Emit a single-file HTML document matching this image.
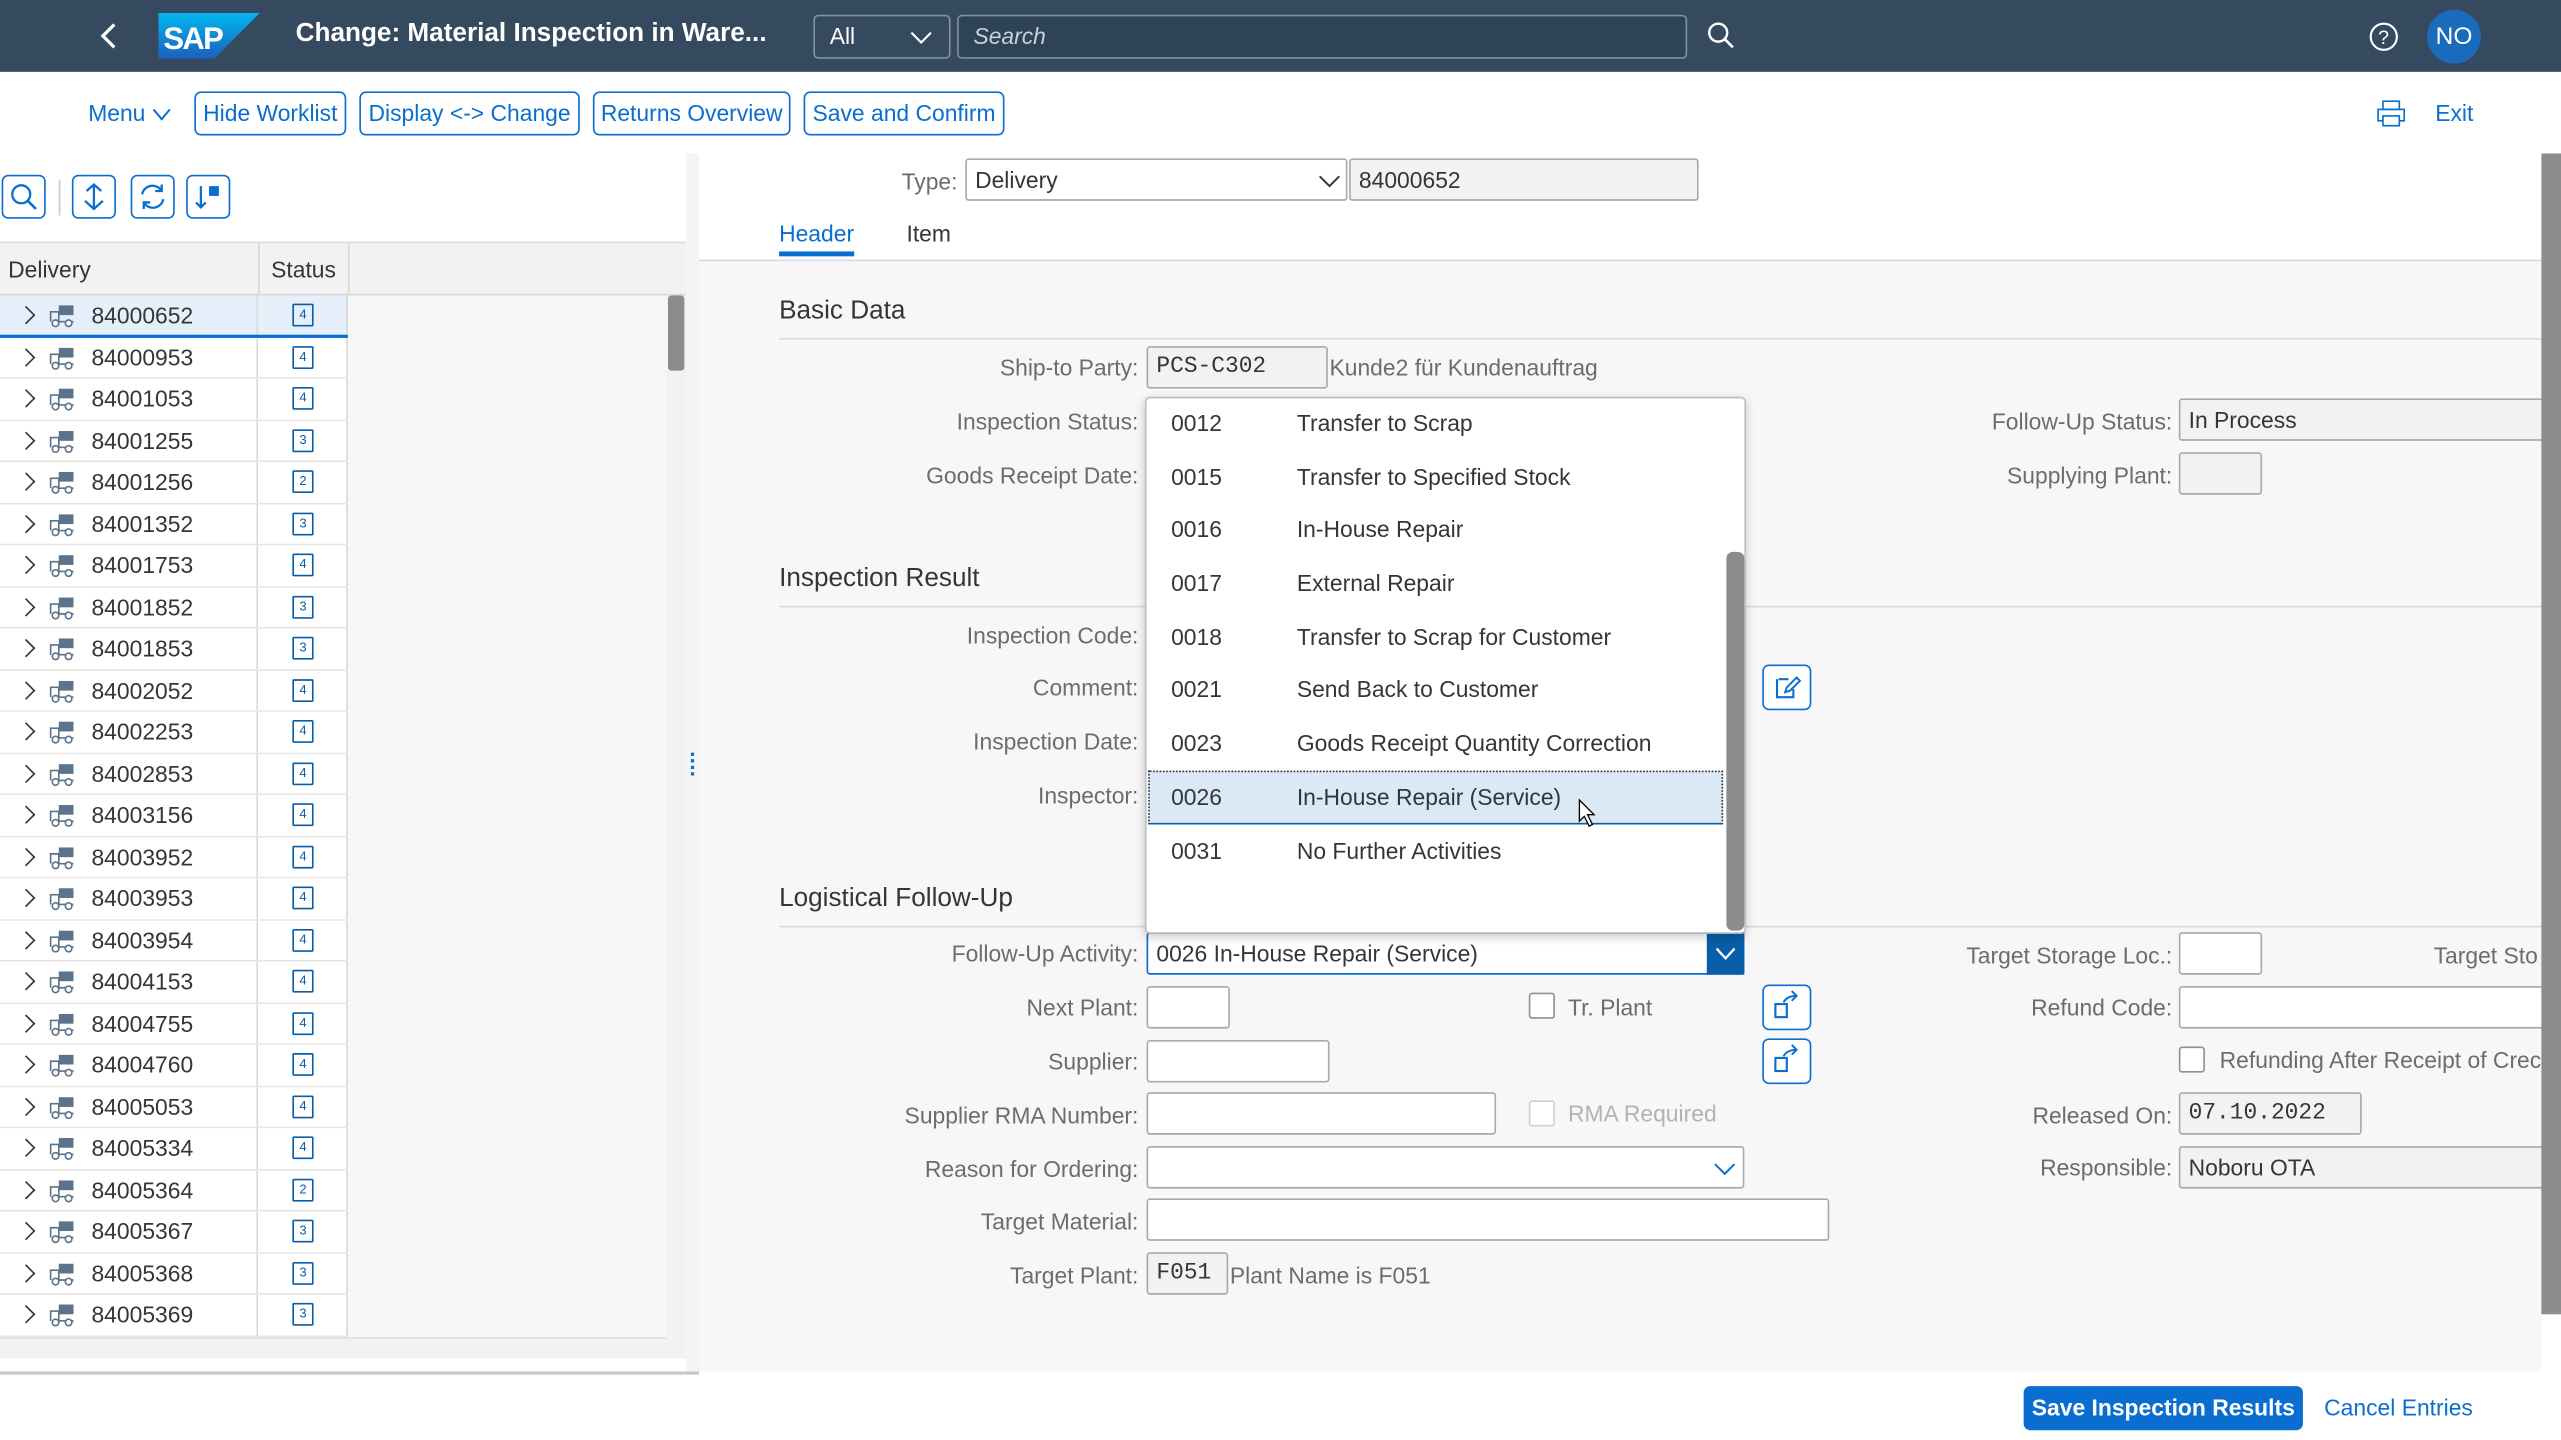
<!DOCTYPE html>
<html><head><meta charset="utf-8">
<style>
*{box-sizing:border-box;margin:0;padding:0}
html,body{width:2561px;height:1440px;overflow:hidden;background:#fff}
#w{position:absolute;left:0;top:0;width:1568px;height:882px;transform:scale(1.63329,1.63265);transform-origin:0 0;font-family:"Liberation Sans",sans-serif;font-size:14px;color:#32363a}
.a{position:absolute}
.hdr{left:0;top:0;width:1568px;height:44px;background:#354a5f}
.btn{position:absolute;top:56px;height:27px;border:1px solid #0a6ed1;border-radius:4px;color:#0a6ed1;font-size:14px;line-height:25px;text-align:center;background:#fff}
.ib{position:absolute;top:107px;width:27px;height:27px;border:1px solid #0a6ed1;border-radius:4px;background:#fff}
.row{position:absolute;left:0;width:213px;height:25.5px;border-bottom:1px solid #e5e5e5}
.row .c1{position:absolute;left:0;width:158px;height:100%;background:#fff;border-right:1px solid #d9d9d9}
.row .c2{position:absolute;left:158px;width:55px;height:100%;background:#fff;border-right:1px solid #d9d9d9}
.row .ch{position:absolute;left:12px;top:7px;width:8px;height:12px;background:none}
.row .ch::before{content:"";position:absolute;left:0;top:1px;width:7px;height:7px;border-right:1.4px solid #32363a;border-top:1.4px solid #32363a;transform:rotate(45deg)}
.row .tk{position:absolute;left:30px;top:6px}
.row .id{position:absolute;left:56px;top:4px;font-size:14px}
.row .st{position:absolute;left:179px;top:5px;width:13px;height:14px;border:1.3px solid #0a5ea8;border-radius:1px;font-size:8px;line-height:11px;text-align:center;color:#0a5ea8}
.lbl{position:absolute;text-align:right;color:#6a6d70;font-size:14px;width:300px}
.inp{position:absolute;height:26px;border:1px solid #a9a9a9;border-radius:2px;background:#fff;padding-left:5px;line-height:24px;font-size:14px;color:#32363a}
.ro{background:#f2f2f2}
.sec{position:absolute;left:477px;font-size:16px;color:#32363a}
.ln{position:absolute;height:1px;background:#d9d9d9}
.dd{position:absolute;left:701px;width:356px;height:33px}
.dd .k{position:absolute;left:16px;top:8px}
.dd .v{position:absolute;left:93px;top:8px}
.cb{position:absolute;width:16px;height:16px;border:1px solid #89919a;border-radius:2px;background:#fff}
.sq{position:absolute;width:30px;height:28px;border:1px solid #0a6ed1;border-radius:4px;background:#fff}
</style></head><body><div id="w">
<div class="a hdr"></div>
<svg class="a" style="left:60px;top:13px" width="14" height="18"><path d="M10 2 L3 9 L10 16" stroke="#fff" stroke-width="2" fill="none"/></svg>
<svg class="a" style="left:97px;top:8px" width="62" height="28"><defs><linearGradient id="g" x1="0" y1="0" x2="0" y2="1"><stop offset="0" stop-color="#00b8f1"/><stop offset="1" stop-color="#1e5fbb"/></linearGradient></defs><path d="M0 0 H62 L34 28 H0Z" fill="url(#g)"/><text x="3" y="22" font-family="Liberation Sans" font-weight="bold" font-size="19" fill="#fff" letter-spacing="-1">SAP</text></svg>
<div class="a" style="left:181px;top:12px;color:#fff;font-weight:bold;font-size:16px">Change: Material Inspection in Ware...</div>
<div class="a" style="left:498px;top:9px;width:84px;height:27px;border:1px solid #7f91a3;border-radius:3px;color:#fff;padding:4px 0 0 9px;font-size:14px">All<svg class="a" style="left:58px;top:8px" width="14" height="10"><path d="M1 2 L7 8 L13 2" stroke="#fff" fill="none" stroke-width="1.3"/></svg></div>
<div class="a" style="left:586px;top:9px;width:447px;height:27px;border:1px solid #7f91a3;border-radius:3px;background:#2f4356;color:#c9d1da;padding:4px 0 0 9px;font-style:italic">Search</div>
<svg class="a" style="left:1045px;top:13px" width="18" height="18"><circle cx="7" cy="7" r="5.5" stroke="#fff" stroke-width="1.5" fill="none"/><path d="M11 11 L16 16" stroke="#fff" stroke-width="1.6"/></svg>
<svg class="a" style="left:1450px;top:13px" width="19" height="19"><circle cx="9.5" cy="9.5" r="8" stroke="#fff" stroke-width="1.3" fill="none"/><text x="6" y="14" fill="#fff" font-size="12" font-family="Liberation Sans">?</text></svg>
<div class="a" style="left:1486px;top:6px;width:33px;height:33px;border-radius:50%;background:#1b6bbd;color:#fff;text-align:center;line-height:33px;font-size:15px">NO</div>

<div class="a" style="left:54px;top:61px;color:#0a6ed1">Menu<svg style="margin-left:4px" width="12" height="8"><path d="M1 1 L6 7 L11 1" stroke="#0a6ed1" fill="none" stroke-width="1.2"/></svg></div>
<div class="btn" style="left:119px;width:93px">Hide Worklist</div>
<div class="btn" style="left:220px;width:135px">Display &lt;-&gt; Change</div>
<div class="btn" style="left:363px;width:121px">Returns Overview</div>
<div class="btn" style="left:492px;width:123px">Save and Confirm</div>
<svg class="a" style="left:1455px;top:61px" width="18" height="17"><rect x="4" y="1" width="10" height="5" stroke="#0a6ed1" fill="none"/><rect x="1" y="6" width="16" height="7" stroke="#0a6ed1" fill="none"/><rect x="4" y="10" width="10" height="6" stroke="#0a6ed1" fill="#fff"/></svg>
<div class="a" style="left:1491px;top:61px;color:#0a6ed1">Exit</div>

<div class="ib" style="left:1px"><svg width="25" height="25"><circle cx="11" cy="11" r="5.5" stroke="#0a6ed1" stroke-width="1.4" fill="none"/><path d="M15 15 L20 20" stroke="#0a6ed1" stroke-width="1.6"/></svg></div>
<div class="a" style="left:36px;top:110px;width:1px;height:22px;background:#ccc"></div>
<div class="ib" style="left:44px"><svg width="25" height="25"><path d="M12.5 5 V19 M8 9 L12.5 5 L17 9 M7 15 L12.5 20 L18 15" stroke="#0a6ed1" stroke-width="1.4" fill="none"/></svg></div>
<div class="ib" style="left:80px"><svg width="25" height="25"><path d="M6 11 A6.5 6.5 0 0 1 18 9 M19 14 A6.5 6.5 0 0 1 7 16" stroke="#0a6ed1" stroke-width="1.4" fill="none"/><path d="M18 5 V9 H14 M7 20 V16 H11" stroke="#0a6ed1" stroke-width="1.4" fill="none"/></svg></div>
<div class="ib" style="left:114px"><svg width="25" height="25"><path d="M8 6 V19 M5 16 L8 19 L11 16" stroke="#0a6ed1" stroke-width="1.4" fill="none"/><rect x="13" y="6" width="6" height="6" fill="#0a6ed1"/></svg></div>

<div class="a" style="left:0;top:148px;width:420px;height:33px;background:#f2f2f2;border-top:1px solid #d9d9d9;border-bottom:1px solid #d9d9d9"></div>
<div class="a" style="left:158px;top:148px;width:1px;height:684px;background:#d9d9d9"></div>
<div class="a" style="left:213px;top:148px;width:1px;height:33px;background:#d9d9d9"></div>
<div class="a" style="left:5px;top:157px">Delivery</div>
<div class="a" style="left:166px;top:157px">Status</div>
<div class="a" style="left:0;top:181px;width:408px;height:651px;background:#f7f7f7"></div>
<div class="a" style="left:408px;top:181px;width:12px;height:651px;background:#f2f2f2"></div>
<div class="a" style="left:409px;top:181px;width:10px;height:46px;background:#8c8c8c;border-radius:2px"></div>
<div class="a" style="left:0;top:819px;width:408px;height:13px;background:#f2f2f2;border-top:1px solid #e0e0e0"></div>
<div class="a" style="left:0;top:840px;width:428px;height:2px;background:#c8c8c8"></div>
<div class="a" style="left:420px;top:94px;width:8px;height:746px;background:#f5f5f5"></div>
<div class="a" style="left:423px;top:461px;width:2px;height:14px;border-left:2px dotted #0a6ed1"></div>

<div class="a" style="left:428px;top:160px;width:1128px;height:680px;background:#f7f7f7"></div>
<div class="ln" style="left:428px;top:159px;width:1128px"></div>
<div class="a" style="left:552px;top:103px;color:#6a6d70">Type:</div>
<div class="inp" style="left:591px;top:97px;width:234px">Delivery<svg class="a" style="left:215px;top:8px" width="14" height="10"><path d="M1 2 L7 8 L13 2" stroke="#32363a" fill="none" stroke-width="1.2"/></svg></div>
<div class="inp ro" style="left:826px;top:97px;width:214px">84000652</div>
<div class="a" style="left:477px;top:135px;color:#0a6ed1">Header</div>
<div class="a" style="left:477px;top:154px;width:46px;height:3px;background:#0a6ed1"></div>
<div class="a" style="left:555px;top:135px">Item</div>

<div class="sec" style="top:182px">Basic Data</div><div class="ln" style="left:477px;top:207px;width:1079px"></div>
<div class="sec" style="top:346px">Inspection Result</div><div class="ln" style="left:477px;top:371px;width:1079px"></div>
<div class="sec" style="top:542px">Logistical Follow-Up</div><div class="ln" style="left:477px;top:567px;width:1079px"></div>

<div class="lbl" style="left:397px;top:217px">Ship-to Party:</div>
<div class="inp ro" style="left:702px;top:212px;width:111px;font-family:'Liberation Mono',monospace">PCS-C302</div>
<div class="a" style="left:814px;top:217px;color:#6a6d70">Kunde2 für Kundenauftrag</div>
<div class="lbl" style="left:397px;top:250px">Inspection Status:</div>
<div class="lbl" style="left:397px;top:283px">Goods Receipt Date:</div>
<div class="lbl" style="left:397px;top:381px">Inspection Code:</div>
<div class="lbl" style="left:397px;top:413px">Comment:</div>
<div class="lbl" style="left:397px;top:446px">Inspection Date:</div>
<div class="lbl" style="left:397px;top:479px">Inspector:</div>
<div class="sq" style="left:1079px;top:407px"><svg width="28" height="26"><path d="M9 8 H15 M8 8 V19 H18 V14" stroke="#0a6ed1" stroke-width="1.3" fill="none"/><path d="M13 16 L14 13 L20 7 L22 9 L16 15Z" stroke="#0a6ed1" stroke-width="1.2" fill="none"/></svg></div>

<div class="lbl" style="left:1030px;top:250px">Follow-Up Status:</div>
<div class="inp ro" style="left:1334px;top:244px;width:230px">In Process</div>
<div class="lbl" style="left:1030px;top:283px">Supplying Plant:</div>
<div class="inp ro" style="left:1334px;top:277px;width:51px"></div>

<div class="lbl" style="left:397px;top:576px">Follow-Up Activity:</div>
<div class="inp" style="left:702px;top:571px;width:366px;border-color:#0a6ed1">0026 In-House Repair (Service)</div>
<div class="a" style="left:1045px;top:571px;width:23px;height:26px;background:#0a5ea8"><svg width="23" height="26"><path d="M6 10 L11.5 16 L17 10" stroke="#fff" stroke-width="1.4" fill="none"/></svg></div>
<div class="lbl" style="left:397px;top:609px">Next Plant:</div>
<div class="inp" style="left:702px;top:604px;width:51px"></div>
<div class="cb" style="left:936px;top:608px"></div><div class="a" style="left:960px;top:609px;color:#6a6d70">Tr. Plant</div>
<div class="sq" style="left:1079px;top:603px"><svg width="28" height="26"><rect x="7" y="11" width="7" height="8" stroke="#0a6ed1" stroke-width="1.3" fill="none"/><path d="M12 10 Q14 6 20 6 M17 3 L20 6 L17 9" stroke="#0a6ed1" stroke-width="1.2" fill="none"/></svg></div>
<div class="lbl" style="left:397px;top:642px">Supplier:</div>
<div class="inp" style="left:702px;top:637px;width:112px"></div>
<div class="sq" style="left:1079px;top:636px"><svg width="28" height="26"><rect x="7" y="11" width="7" height="8" stroke="#0a6ed1" stroke-width="1.3" fill="none"/><path d="M12 10 Q14 6 20 6 M17 3 L20 6 L17 9" stroke="#0a6ed1" stroke-width="1.2" fill="none"/></svg></div>
<div class="lbl" style="left:397px;top:675px">Supplier RMA Number:</div>
<div class="inp" style="left:702px;top:669px;width:214px"></div>
<div class="cb" style="left:936px;top:674px;border-color:#d0d0d0"></div><div class="a" style="left:960px;top:674px;color:#b3b3b3">RMA Required</div>
<div class="lbl" style="left:397px;top:708px">Reason for Ordering:</div>
<div class="inp" style="left:702px;top:702px;width:366px"><svg class="a" style="left:346px;top:8px" width="14" height="10"><path d="M1 2 L7 8 L13 2" stroke="#0a6ed1" fill="none" stroke-width="1.2"/></svg></div>
<div class="lbl" style="left:397px;top:740px">Target Material:</div>
<div class="inp" style="left:702px;top:734px;width:418px"></div>
<div class="lbl" style="left:397px;top:773px">Target Plant:</div>
<div class="inp ro" style="left:702px;top:767px;width:50px;font-family:'Liberation Mono',monospace">F051</div>
<div class="a" style="left:753px;top:773px;color:#6a6d70">Plant Name is F051</div>

<div class="lbl" style="left:1030px;top:577px">Target Storage Loc.:</div>
<div class="inp" style="left:1334px;top:571px;width:51px"></div>
<div class="a" style="left:1490px;top:577px;color:#6a6d70;white-space:nowrap">Target Sto</div>
<div class="lbl" style="left:1030px;top:609px">Refund Code:</div>
<div class="inp" style="left:1334px;top:604px;width:230px"></div>
<div class="cb" style="left:1334px;top:641px"></div><div class="a" style="left:1359px;top:641px;color:#6a6d70;white-space:nowrap">Refunding After Receipt of Crec</div>
<div class="lbl" style="left:1030px;top:675px">Released On:</div>
<div class="inp ro" style="left:1334px;top:669px;width:112px;font-family:'Liberation Mono',monospace">07.10.2022</div>
<div class="lbl" style="left:1030px;top:707px">Responsible:</div>
<div class="inp ro" style="left:1334px;top:702px;width:230px">Noboru OTA</div>

<div class="a" style="left:1556px;top:94px;width:12px;height:711px;background:#8c8c8c"></div>

<div class="a" style="left:701px;top:243px;width:368px;height:329px;background:#fff;border:1px solid #bfbfbf;border-radius:3px;box-shadow:0 2px 6px rgba(0,0,0,.2)"></div>
<div class="dd" style="top:243px"><span class="k">0012</span><span class="v">Transfer to Scrap</span></div>
<div class="dd" style="top:276px"><span class="k">0015</span><span class="v">Transfer to Specified Stock</span></div>
<div class="dd" style="top:308px"><span class="k">0016</span><span class="v">In-House Repair</span></div>
<div class="dd" style="top:341px"><span class="k">0017</span><span class="v">External Repair</span></div>
<div class="dd" style="top:374px"><span class="k">0018</span><span class="v">Transfer to Scrap for Customer</span></div>
<div class="dd" style="top:406px"><span class="k">0021</span><span class="v">Send Back to Customer</span></div>
<div class="dd" style="top:439px"><span class="k">0023</span><span class="v">Goods Receipt Quantity Correction</span></div>
<div class="dd" style="top:472px;left:703px;width:352px;background:#dbe8f6;border:1px dotted #333;border-bottom:1px solid #0a5ea8"><span class="k" style="left:13px;top:7px">0026</span><span class="v" style="left:90px;top:7px">In-House Repair (Service)</span></div>
<div class="dd" style="top:505px"><span class="k">0031</span><span class="v">No Further Activities</span></div>
<div class="a" style="left:1057px;top:338px;width:11px;height:232px;background:#8c8c8c;border-radius:4px"></div>
<svg class="a" style="left:966px;top:489px" width="12" height="18"><path d="M1 1 V14 L4 11 L7 17 L9 16 L6 10 H10Z" fill="#fff" stroke="#000" stroke-width=".8"/></svg>

<div class="a" style="left:1239px;top:849px;width:171px;height:27px;background:#0a6ed1;border-radius:4px;color:#fff;font-weight:bold;text-align:center;line-height:27px">Save Inspection Results</div>
<div class="a" style="left:1423px;top:854px;color:#0a6ed1">Cancel Entries</div>

<div class="row" style="top:181px"><div class="c1" style="background:#e5f0fa"></div><div class="c2" style="background:#e5f0fa"></div><span class="ch"></span><svg class="tk" width="16" height="14"><rect x="6" y="0" width="9" height="6" fill="#5b738b"/><path d="M1 10 V4 H6 V10 H15" stroke="#5b738b" fill="none"/><circle cx="4" cy="11" r="2" stroke="#5b738b" fill="#fff"/><circle cx="12" cy="11" r="2" stroke="#5b738b" fill="#fff"/></svg><span class="id">84000652</span><span class="st">4</span></div>
<div class="a" style="left:0;top:205px;width:213px;height:2px;background:#0a6ed1"></div>
<div class="row" style="top:206.5px"><div class="c1"></div><div class="c2"></div><span class="ch"></span><svg class="tk" width="16" height="14"><rect x="6" y="0" width="9" height="6" fill="#5b738b"/><path d="M1 10 V4 H6 V10 H15" stroke="#5b738b" fill="none"/><circle cx="4" cy="11" r="2" stroke="#5b738b" fill="#fff"/><circle cx="12" cy="11" r="2" stroke="#5b738b" fill="#fff"/></svg><span class="id">84000953</span><span class="st">4</span></div>
<div class="row" style="top:232px"><div class="c1"></div><div class="c2"></div><span class="ch"></span><svg class="tk" width="16" height="14"><rect x="6" y="0" width="9" height="6" fill="#5b738b"/><path d="M1 10 V4 H6 V10 H15" stroke="#5b738b" fill="none"/><circle cx="4" cy="11" r="2" stroke="#5b738b" fill="#fff"/><circle cx="12" cy="11" r="2" stroke="#5b738b" fill="#fff"/></svg><span class="id">84001053</span><span class="st">4</span></div>
<div class="row" style="top:257.5px"><div class="c1"></div><div class="c2"></div><span class="ch"></span><svg class="tk" width="16" height="14"><rect x="6" y="0" width="9" height="6" fill="#5b738b"/><path d="M1 10 V4 H6 V10 H15" stroke="#5b738b" fill="none"/><circle cx="4" cy="11" r="2" stroke="#5b738b" fill="#fff"/><circle cx="12" cy="11" r="2" stroke="#5b738b" fill="#fff"/></svg><span class="id">84001255</span><span class="st">3</span></div>
<div class="row" style="top:283px"><div class="c1"></div><div class="c2"></div><span class="ch"></span><svg class="tk" width="16" height="14"><rect x="6" y="0" width="9" height="6" fill="#5b738b"/><path d="M1 10 V4 H6 V10 H15" stroke="#5b738b" fill="none"/><circle cx="4" cy="11" r="2" stroke="#5b738b" fill="#fff"/><circle cx="12" cy="11" r="2" stroke="#5b738b" fill="#fff"/></svg><span class="id">84001256</span><span class="st">2</span></div>
<div class="row" style="top:308.5px"><div class="c1"></div><div class="c2"></div><span class="ch"></span><svg class="tk" width="16" height="14"><rect x="6" y="0" width="9" height="6" fill="#5b738b"/><path d="M1 10 V4 H6 V10 H15" stroke="#5b738b" fill="none"/><circle cx="4" cy="11" r="2" stroke="#5b738b" fill="#fff"/><circle cx="12" cy="11" r="2" stroke="#5b738b" fill="#fff"/></svg><span class="id">84001352</span><span class="st">3</span></div>
<div class="row" style="top:334px"><div class="c1"></div><div class="c2"></div><span class="ch"></span><svg class="tk" width="16" height="14"><rect x="6" y="0" width="9" height="6" fill="#5b738b"/><path d="M1 10 V4 H6 V10 H15" stroke="#5b738b" fill="none"/><circle cx="4" cy="11" r="2" stroke="#5b738b" fill="#fff"/><circle cx="12" cy="11" r="2" stroke="#5b738b" fill="#fff"/></svg><span class="id">84001753</span><span class="st">4</span></div>
<div class="row" style="top:359.5px"><div class="c1"></div><div class="c2"></div><span class="ch"></span><svg class="tk" width="16" height="14"><rect x="6" y="0" width="9" height="6" fill="#5b738b"/><path d="M1 10 V4 H6 V10 H15" stroke="#5b738b" fill="none"/><circle cx="4" cy="11" r="2" stroke="#5b738b" fill="#fff"/><circle cx="12" cy="11" r="2" stroke="#5b738b" fill="#fff"/></svg><span class="id">84001852</span><span class="st">3</span></div>
<div class="row" style="top:385px"><div class="c1"></div><div class="c2"></div><span class="ch"></span><svg class="tk" width="16" height="14"><rect x="6" y="0" width="9" height="6" fill="#5b738b"/><path d="M1 10 V4 H6 V10 H15" stroke="#5b738b" fill="none"/><circle cx="4" cy="11" r="2" stroke="#5b738b" fill="#fff"/><circle cx="12" cy="11" r="2" stroke="#5b738b" fill="#fff"/></svg><span class="id">84001853</span><span class="st">3</span></div>
<div class="row" style="top:410.5px"><div class="c1"></div><div class="c2"></div><span class="ch"></span><svg class="tk" width="16" height="14"><rect x="6" y="0" width="9" height="6" fill="#5b738b"/><path d="M1 10 V4 H6 V10 H15" stroke="#5b738b" fill="none"/><circle cx="4" cy="11" r="2" stroke="#5b738b" fill="#fff"/><circle cx="12" cy="11" r="2" stroke="#5b738b" fill="#fff"/></svg><span class="id">84002052</span><span class="st">4</span></div>
<div class="row" style="top:436px"><div class="c1"></div><div class="c2"></div><span class="ch"></span><svg class="tk" width="16" height="14"><rect x="6" y="0" width="9" height="6" fill="#5b738b"/><path d="M1 10 V4 H6 V10 H15" stroke="#5b738b" fill="none"/><circle cx="4" cy="11" r="2" stroke="#5b738b" fill="#fff"/><circle cx="12" cy="11" r="2" stroke="#5b738b" fill="#fff"/></svg><span class="id">84002253</span><span class="st">4</span></div>
<div class="row" style="top:461.5px"><div class="c1"></div><div class="c2"></div><span class="ch"></span><svg class="tk" width="16" height="14"><rect x="6" y="0" width="9" height="6" fill="#5b738b"/><path d="M1 10 V4 H6 V10 H15" stroke="#5b738b" fill="none"/><circle cx="4" cy="11" r="2" stroke="#5b738b" fill="#fff"/><circle cx="12" cy="11" r="2" stroke="#5b738b" fill="#fff"/></svg><span class="id">84002853</span><span class="st">4</span></div>
<div class="row" style="top:487px"><div class="c1"></div><div class="c2"></div><span class="ch"></span><svg class="tk" width="16" height="14"><rect x="6" y="0" width="9" height="6" fill="#5b738b"/><path d="M1 10 V4 H6 V10 H15" stroke="#5b738b" fill="none"/><circle cx="4" cy="11" r="2" stroke="#5b738b" fill="#fff"/><circle cx="12" cy="11" r="2" stroke="#5b738b" fill="#fff"/></svg><span class="id">84003156</span><span class="st">4</span></div>
<div class="row" style="top:512.5px"><div class="c1"></div><div class="c2"></div><span class="ch"></span><svg class="tk" width="16" height="14"><rect x="6" y="0" width="9" height="6" fill="#5b738b"/><path d="M1 10 V4 H6 V10 H15" stroke="#5b738b" fill="none"/><circle cx="4" cy="11" r="2" stroke="#5b738b" fill="#fff"/><circle cx="12" cy="11" r="2" stroke="#5b738b" fill="#fff"/></svg><span class="id">84003952</span><span class="st">4</span></div>
<div class="row" style="top:538px"><div class="c1"></div><div class="c2"></div><span class="ch"></span><svg class="tk" width="16" height="14"><rect x="6" y="0" width="9" height="6" fill="#5b738b"/><path d="M1 10 V4 H6 V10 H15" stroke="#5b738b" fill="none"/><circle cx="4" cy="11" r="2" stroke="#5b738b" fill="#fff"/><circle cx="12" cy="11" r="2" stroke="#5b738b" fill="#fff"/></svg><span class="id">84003953</span><span class="st">4</span></div>
<div class="row" style="top:563.5px"><div class="c1"></div><div class="c2"></div><span class="ch"></span><svg class="tk" width="16" height="14"><rect x="6" y="0" width="9" height="6" fill="#5b738b"/><path d="M1 10 V4 H6 V10 H15" stroke="#5b738b" fill="none"/><circle cx="4" cy="11" r="2" stroke="#5b738b" fill="#fff"/><circle cx="12" cy="11" r="2" stroke="#5b738b" fill="#fff"/></svg><span class="id">84003954</span><span class="st">4</span></div>
<div class="row" style="top:589px"><div class="c1"></div><div class="c2"></div><span class="ch"></span><svg class="tk" width="16" height="14"><rect x="6" y="0" width="9" height="6" fill="#5b738b"/><path d="M1 10 V4 H6 V10 H15" stroke="#5b738b" fill="none"/><circle cx="4" cy="11" r="2" stroke="#5b738b" fill="#fff"/><circle cx="12" cy="11" r="2" stroke="#5b738b" fill="#fff"/></svg><span class="id">84004153</span><span class="st">4</span></div>
<div class="row" style="top:614.5px"><div class="c1"></div><div class="c2"></div><span class="ch"></span><svg class="tk" width="16" height="14"><rect x="6" y="0" width="9" height="6" fill="#5b738b"/><path d="M1 10 V4 H6 V10 H15" stroke="#5b738b" fill="none"/><circle cx="4" cy="11" r="2" stroke="#5b738b" fill="#fff"/><circle cx="12" cy="11" r="2" stroke="#5b738b" fill="#fff"/></svg><span class="id">84004755</span><span class="st">4</span></div>
<div class="row" style="top:640px"><div class="c1"></div><div class="c2"></div><span class="ch"></span><svg class="tk" width="16" height="14"><rect x="6" y="0" width="9" height="6" fill="#5b738b"/><path d="M1 10 V4 H6 V10 H15" stroke="#5b738b" fill="none"/><circle cx="4" cy="11" r="2" stroke="#5b738b" fill="#fff"/><circle cx="12" cy="11" r="2" stroke="#5b738b" fill="#fff"/></svg><span class="id">84004760</span><span class="st">4</span></div>
<div class="row" style="top:665.5px"><div class="c1"></div><div class="c2"></div><span class="ch"></span><svg class="tk" width="16" height="14"><rect x="6" y="0" width="9" height="6" fill="#5b738b"/><path d="M1 10 V4 H6 V10 H15" stroke="#5b738b" fill="none"/><circle cx="4" cy="11" r="2" stroke="#5b738b" fill="#fff"/><circle cx="12" cy="11" r="2" stroke="#5b738b" fill="#fff"/></svg><span class="id">84005053</span><span class="st">4</span></div>
<div class="row" style="top:691px"><div class="c1"></div><div class="c2"></div><span class="ch"></span><svg class="tk" width="16" height="14"><rect x="6" y="0" width="9" height="6" fill="#5b738b"/><path d="M1 10 V4 H6 V10 H15" stroke="#5b738b" fill="none"/><circle cx="4" cy="11" r="2" stroke="#5b738b" fill="#fff"/><circle cx="12" cy="11" r="2" stroke="#5b738b" fill="#fff"/></svg><span class="id">84005334</span><span class="st">4</span></div>
<div class="row" style="top:716.5px"><div class="c1"></div><div class="c2"></div><span class="ch"></span><svg class="tk" width="16" height="14"><rect x="6" y="0" width="9" height="6" fill="#5b738b"/><path d="M1 10 V4 H6 V10 H15" stroke="#5b738b" fill="none"/><circle cx="4" cy="11" r="2" stroke="#5b738b" fill="#fff"/><circle cx="12" cy="11" r="2" stroke="#5b738b" fill="#fff"/></svg><span class="id">84005364</span><span class="st">2</span></div>
<div class="row" style="top:742px"><div class="c1"></div><div class="c2"></div><span class="ch"></span><svg class="tk" width="16" height="14"><rect x="6" y="0" width="9" height="6" fill="#5b738b"/><path d="M1 10 V4 H6 V10 H15" stroke="#5b738b" fill="none"/><circle cx="4" cy="11" r="2" stroke="#5b738b" fill="#fff"/><circle cx="12" cy="11" r="2" stroke="#5b738b" fill="#fff"/></svg><span class="id">84005367</span><span class="st">3</span></div>
<div class="row" style="top:767.5px"><div class="c1"></div><div class="c2"></div><span class="ch"></span><svg class="tk" width="16" height="14"><rect x="6" y="0" width="9" height="6" fill="#5b738b"/><path d="M1 10 V4 H6 V10 H15" stroke="#5b738b" fill="none"/><circle cx="4" cy="11" r="2" stroke="#5b738b" fill="#fff"/><circle cx="12" cy="11" r="2" stroke="#5b738b" fill="#fff"/></svg><span class="id">84005368</span><span class="st">3</span></div>
<div class="row" style="top:793px"><div class="c1"></div><div class="c2"></div><span class="ch"></span><svg class="tk" width="16" height="14"><rect x="6" y="0" width="9" height="6" fill="#5b738b"/><path d="M1 10 V4 H6 V10 H15" stroke="#5b738b" fill="none"/><circle cx="4" cy="11" r="2" stroke="#5b738b" fill="#fff"/><circle cx="12" cy="11" r="2" stroke="#5b738b" fill="#fff"/></svg><span class="id">84005369</span><span class="st">3</span></div>
</div></body></html>
